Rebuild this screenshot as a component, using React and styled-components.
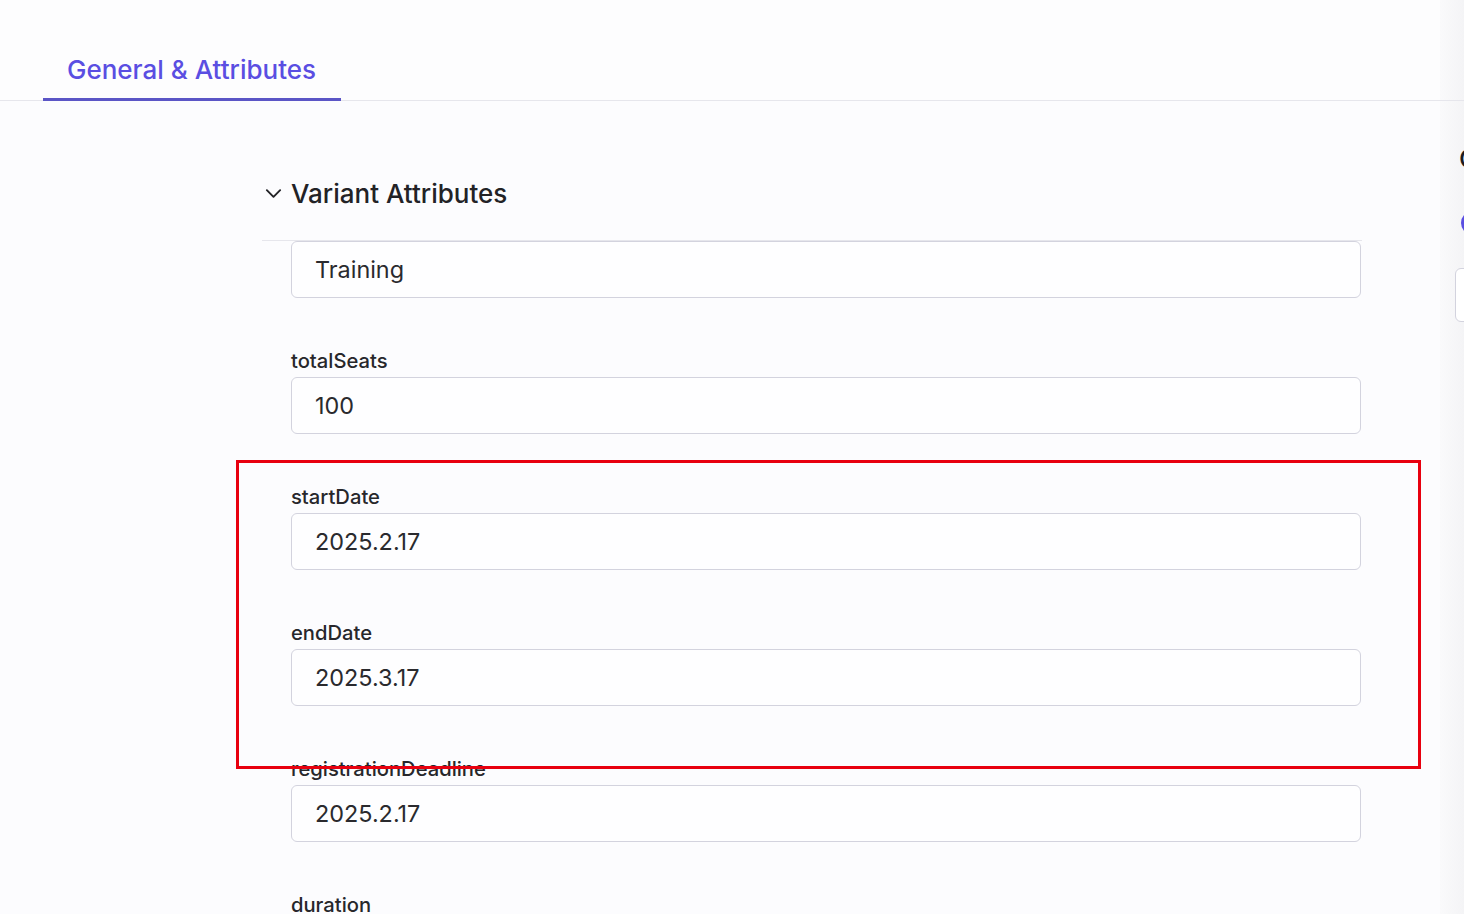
import React, { useLayoutEffect, useRef } from "react";
import styled, { createGlobalStyle } from "styled-components";

const Global = createGlobalStyle`
  html, body {
    margin: 0;
    padding: 0;
    height: 100%;
    overflow: hidden;
    background: #fcfcfe;
  }
  body {
    font-family: Inter, "Noto Sans", "Liberation Sans", sans-serif;
    color: #232326;
  }
  * { box-sizing: border-box; }
`;

const Page = styled.div`
  position: relative;
  display: flex;
  width: 1464px;
  height: 914px;
  overflow: hidden;
`;

const Main = styled.div`
  width: 1440px;
  flex-shrink: 0;
  display: flex;
  flex-direction: column;
  background: #fcfcfe;
`;

const TabBar = styled.div`
  height: 101px;
  display: flex;
  align-items: flex-end;
  padding-left: 43px;
  border-bottom: 1px solid #e6e6ec;
  background: #fdfdfe;
`;

const Tab = styled.div`
  padding: 0 24px 12px;
  width: 298px;
  font-size: 26px;
  line-height: 32px;
  font-weight: 500;
  color: ${(p) => (p.$active ? "#5a4ee2" : "#555")};
  border-bottom: 3px solid ${(p) => (p.$active ? "#5b55c6" : "transparent")};
  margin-bottom: -1px;
  white-space: nowrap;
`;

const Content = styled.div`
  flex: 1;
  min-height: 0;
  display: flex;
  flex-direction: column;
  padding: 76px 0 0 262px;
`;

const SectionHeader = styled.div`
  display: flex;
  align-items: center;
  gap: 8px;
  height: 32px;
  font-size: 26px;
  font-weight: 500;
  color: #222226;
  padding-left: 2px;
`;

const Chevron = styled.svg`
  width: 19px;
  height: 19px;
  flex-shrink: 0;
`;

const ScrollArea = styled.div`
  margin-top: 31px;
  width: 1100px;
  flex: 1;
  min-height: 0;
  overflow-y: auto;
  scrollbar-width: none;
  border-top: 1px solid #e6e6ec;
  padding-left: 29px;
  &::-webkit-scrollbar { display: none; }
`;

const Field = styled.div`
  width: 1070px;
  margin-bottom: 50px;
`;

const Label = styled.div`
  font-size: 20.2px;
  line-height: 26px;
  font-weight: 500;
  color: #27272b;
  margin-bottom: 3px;
`;

const Input = styled.div`
  height: 57px;
  border: 1px solid #d3d3de;
  border-radius: 6px;
  background: #fefeff;
  display: flex;
  align-items: center;
  padding-left: 23px;
  font-size: 23.4px;
  color: #2a2a2e;
`;

const SidePanel = styled.div`
  flex: 1;
  background: linear-gradient(90deg, #fafafb 0%, #f4f4f6 100%);
  display: flex;
  flex-direction: column;
  overflow: hidden;
`;

const SideTop = styled.div`
  height: 101px;
  flex-shrink: 0;
  border-bottom: 1px solid #e6e6ec;
`;

const SideBody = styled.div`
  padding: 43px 0 0 15px;
  display: flex;
  flex-direction: column;
`;

const SideTitle = styled.div`
  font-size: 26px;
  line-height: 30px;
  font-weight: 500;
  color: #1c1c1f;
  margin-left: 4px;
  white-space: nowrap;
`;

const Radio = styled.div`
  margin: 37px 0 0 6px;
  width: 24px;
  height: 24px;
  border-radius: 50%;
  border: 3px solid #5a4ee2;
  flex-shrink: 0;
`;

const SideBox = styled.div`
  margin-top: 33px;
  width: 200px;
  height: 54px;
  border: 1px solid #d3d3de;
  border-radius: 6px;
  background: #fff;
  flex-shrink: 0;
`;

const Highlight = styled.div`
  position: absolute;
  left: 236px;
  top: 460px;
  width: 1185px;
  height: 309px;
  border: 3px solid #e8000f;
  pointer-events: none;
`;

const fields = [
  { label: "type", value: "Training" },
  { label: "totalSeats", value: "100" },
  { label: "startDate", value: "2025.2.17" },
  { label: "endDate", value: "2025.3.17" },
  { label: "registrationDeadline", value: "2025.2.17" },
  { label: "duration", value: "4 weeks" },
];

export default function App() {
  const scrollRef = useRef(null);
  useLayoutEffect(() => {
    if (scrollRef.current) scrollRef.current.scrollTop = 29;
  }, []);

  return (
    <>
      <Global />
      <Page>
        <Main>
          <TabBar>
            <Tab $active>General &amp; Attributes</Tab>
          </TabBar>
          <Content>
            <SectionHeader>
              <Chevron viewBox="0 0 20 20" fill="none">
                <polyline
                  points="3,6.5 10,13.5 17,6.5"
                  stroke="#222226"
                  strokeWidth="2"
                  strokeLinecap="round"
                  strokeLinejoin="round"
                />
              </Chevron>
              Variant Attributes
            </SectionHeader>
            <ScrollArea ref={scrollRef}>
              {fields.map((f) => (
                <Field key={f.label}>
                  <Label>{f.label}</Label>
                  <Input>{f.value}</Input>
                </Field>
              ))}
            </ScrollArea>
          </Content>
        </Main>
        <SidePanel>
          <SideTop />
          <SideBody>
            <SideTitle>Options</SideTitle>
            <Radio />
            <SideBox />
          </SideBody>
        </SidePanel>
        <Highlight />
      </Page>
    </>
  );
}
